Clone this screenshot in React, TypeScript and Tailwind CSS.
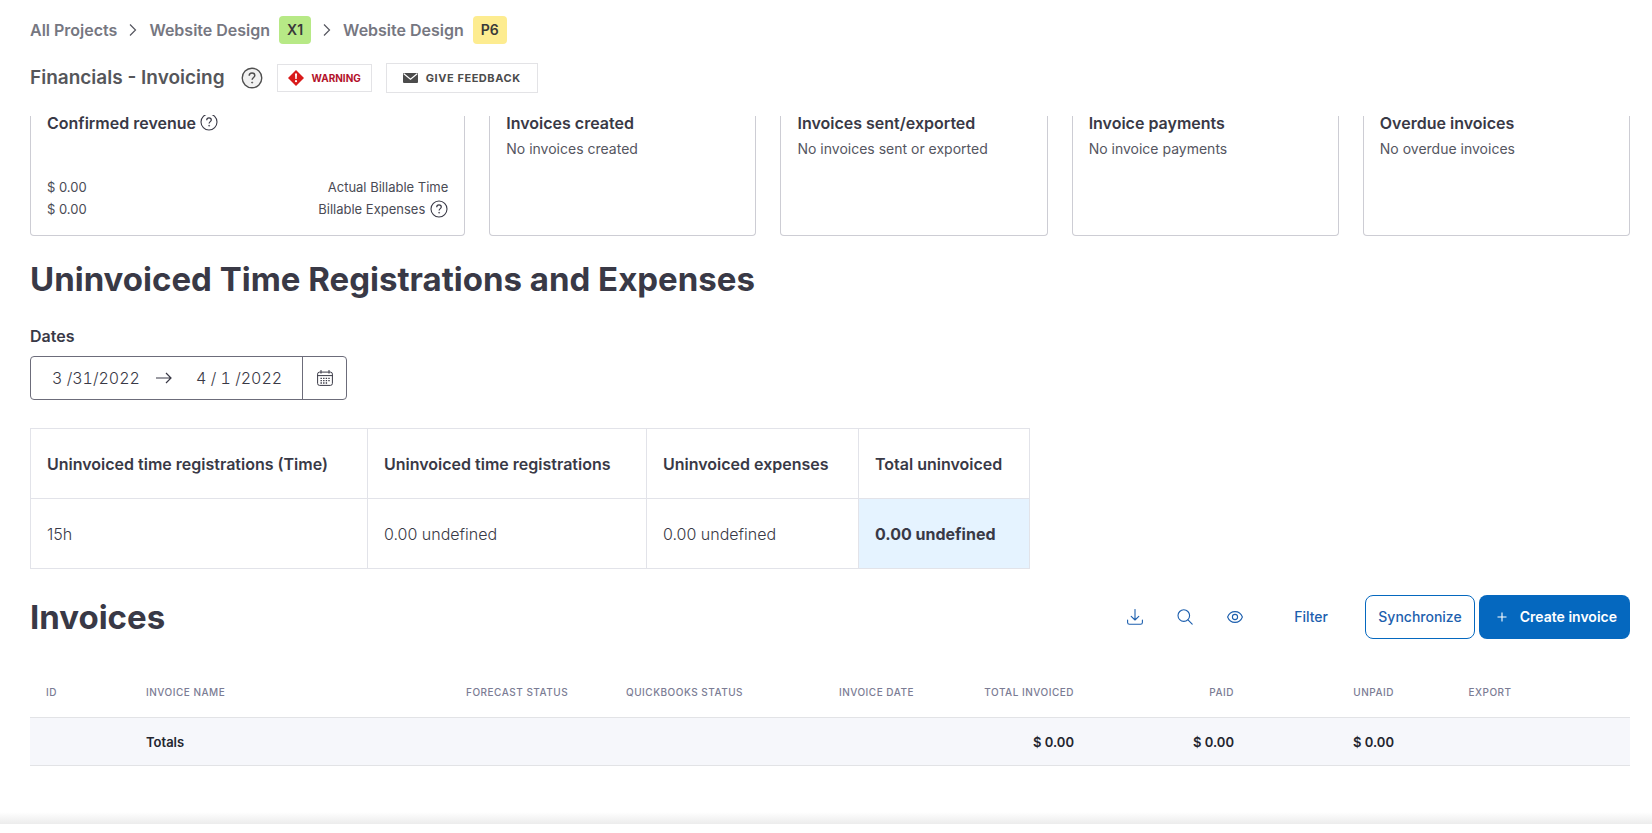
import { useState, type ReactNode } from "react";

interface SummaryCard {
  title: string;
  text: string;
}

const summaryCards: SummaryCard[] = [
  { title: "Invoices created", text: "No invoices created" },
  { title: "Invoices sent/exported", text: "No invoices sent or exported" },
  { title: "Invoice payments", text: "No invoice payments" },
  { title: "Overdue invoices", text: "No overdue invoices" },
];

const invoiceColumns = [
  { label: "ID", width: "w-[6.25%]", align: "text-left", total: "" },
  { label: "Invoice name", width: "w-[20%]", align: "text-left", total: "Totals" },
  { label: "Forecast status", width: "w-[10%]", align: "text-left", total: "" },
  { label: "Quickbooks status", width: "w-[10%]", align: "text-left", total: "" },
  { label: "Invoice date", width: "w-[10%]", align: "text-right", total: "" },
  { label: "Total invoiced", width: "w-[10%]", align: "text-right", total: "$ 0.00" },
  { label: "Paid", width: "w-[10%]", align: "text-right", total: "$ 0.00" },
  { label: "Unpaid", width: "w-[10%]", align: "text-right", total: "$ 0.00" },
  { label: "Export", width: "w-[10%]", align: "text-center", total: "" },
  { label: "", width: "w-[3.75%]", align: "text-left", total: "" },
];

function HelpIcon({ className }: { className?: string }) {
  return (
    <svg className={className} viewBox="0 0 18 18" fill="none" stroke="currentColor" aria-hidden="true">
      <circle cx="9" cy="9" r="8" strokeWidth="1.1" />
      <path d="M6.7 7.2c0-1.4 1-2.3 2.3-2.3s2.3.9 2.3 2.1c0 1.6-2.2 1.7-2.2 3.5" fill="none" strokeWidth="1.2" />
      <circle cx="9.1" cy="12.7" r=".5" fill="currentColor" strokeWidth=".6" />
    </svg>
  );
}

function Chevron() {
  return (
    <svg className="h-3 w-2" viewBox="0 0 8 12" fill="none" stroke="#55565f" strokeWidth="1.2" aria-hidden="true">
      <path d="M1 .5 6.5 6 1 11.5" />
    </svg>
  );
}

function IconButton({ label, children }: { label: string; children: ReactNode }) {
  return (
    <button type="button" aria-label={label} className="flex h-11 w-[50px] items-center justify-center">
      <svg className="size-4" viewBox="0 0 16 16" fill="none" stroke="currentColor" strokeWidth="1.1" strokeLinecap="round" strokeLinejoin="round">
        {children}
      </svg>
    </button>
  );
}

function Header() {
  return (
    <header className="px-[30px] pt-4">
      <nav aria-label="Breadcrumb" className="flex h-7 items-center text-base font-semibold text-[#767781]">
        <a href="#projects">All Projects</a>
        <span className="px-3">
          <Chevron />
        </span>
        <a href="#website-design" className="flex items-center gap-[9px]">
          Website Design
          <span className="flex h-7 w-8 items-center justify-center rounded bg-[#b7e986] text-sm text-[#393939]">X1</span>
        </a>
        <span className="px-3">
          <Chevron />
        </span>
        <a href="#website-design-p6" className="flex items-center gap-[9px]">
          Website Design
          <span className="flex h-7 w-[34px] items-center justify-center rounded bg-[#fdec90] text-sm text-[#393939]">P6</span>
        </a>
      </nav>
      <div className="mt-[19px] flex h-[30px] items-center">
        <h1 className="text-[19px] font-semibold text-[#55565a]">Financials - Invoicing</h1>
        <button type="button" aria-label="Help" className="ml-4 flex size-[22px] items-center justify-center text-[#4f4f4f]">
          <HelpIcon className="size-[22px] fill-[#f1f1f1]" />
        </button>
        <button type="button" className="ml-[14px] flex h-7 items-center gap-2 border border-[#e3e3e6] px-[10px] text-[10px] font-bold text-[#b3122b]">
          <svg className="size-4" viewBox="0 0 16 16" aria-hidden="true">
            <path d="M8 0 16 8 8 16 0 8Z" fill="#d91a1a" />
            <path d="M7 3.6h2L8.7 9H7.3Z" fill="#fff" />
            <circle cx="8" cy="11.2" r="1.1" fill="#fff" />
          </svg>
          WARNING
        </button>
        <button type="button" className="ml-[14px] flex h-[30px] items-center gap-2 border border-[#e3e3e6] px-4 text-[11px] font-bold tracking-wider text-[#4c4c4c]">
          <svg className="h-[10px] w-[15px]" viewBox="0 0 15 10" aria-hidden="true">
            <rect width="15" height="10" rx="1" fill="#4c4c4c" />
            <path d="m.8.8 6.7 5.4L14.2.8" fill="none" stroke="#fff" strokeWidth="1.2" />
          </svg>
          GIVE FEEDBACK
        </button>
      </div>
    </header>
  );
}

function Summary() {
  return (
    <section aria-label="Summary" className="grid grid-cols-[435fr_267fr_267fr_267fr_267fr] gap-6">
      <div className="flex h-[120px] flex-col justify-between rounded-b-sm border border-t-0 border-[#cdcdd4] px-4 pb-[15px]">
        <h3 className="flex h-[14px] items-center gap-1 text-base leading-[14px] font-semibold">
          Confirmed revenue
          <span className="flex h-4 items-end overflow-hidden">
            <HelpIcon className="size-[18px] shrink-0" />
          </span>
        </h3>
        <dl className="text-[13px] leading-[22px] text-[#4a4b55]">
          <div className="flex flex-row-reverse justify-between">
            <dt>Actual Billable Time</dt>
            <dd>$ 0.00</dd>
          </div>
          <div className="flex flex-row-reverse justify-between">
            <dt className="flex items-center gap-[5px]">
              Billable Expenses
              <HelpIcon className="size-[18px] text-[#393946]" />
            </dt>
            <dd>$ 0.00</dd>
          </div>
        </dl>
      </div>
      {summaryCards.map((card) => (
        <div key={card.title} className="h-[120px] rounded-b-sm border border-t-0 border-[#cdcdd4] px-4">
          <h3 className="h-[14px] text-base leading-[14px] font-semibold">{card.title}</h3>
          <p className="mt-[9px] text-sm text-[#55565f]">{card.text}</p>
        </div>
      ))}
    </section>
  );
}

function DateRange() {
  const [from, setFrom] = useState("3 /31/2022");
  const [to, setTo] = useState("4 / 1 /2022");

  return (
    <div className="mt-[23px]">
      <label htmlFor="date-from" className="text-base font-semibold">
        Dates
      </label>
      <div className="mt-2 flex h-11 w-[317px] items-center rounded-sm border border-[#6c6c7a] text-base font-light text-[#393946] tabular-nums">
        <input id="date-from" value={from} onChange={(e) => setFrom(e.target.value)} className="ml-[21px] w-[90px]" />
        <svg className="ml-[14px] h-3 w-4" viewBox="0 0 16 12" fill="none" stroke="currentColor" strokeWidth="1.2" aria-hidden="true">
          <path d="M0 6h15M10 1l5 5-5 5" />
        </svg>
        <input aria-label="End date" value={to} onChange={(e) => setTo(e.target.value)} className="ml-6 w-[90px]" />
        <button type="button" aria-label="Open calendar" className="ml-auto flex h-full w-11 items-center justify-center border-l border-[#6c6c7a]">
          <svg className="size-4" viewBox="0 0 16 16" fill="none" stroke="currentColor" aria-hidden="true">
            <rect x=".6" y="2.1" width="14.8" height="13.3" rx="2" />
            <path d="M.6 5.6h14.8M4 0v3.6M12 0v3.6" />
            <path d="M3.500 8.300h9.600M3.500 10.700h9.600M3.500 13h7" strokeWidth="1.3" strokeDasharray="1.4 1.2" />
          </svg>
        </button>
      </div>
    </div>
  );
}

function UninvoicedTable() {
  return (
    <table className="mt-7 w-[1000px] max-w-full table-fixed border-collapse text-left text-base">
      <thead>
        <tr className="h-[70px]">
          <th className="w-[337px] border border-[#e2e3e9] px-4 font-semibold">Uninvoiced time registrations (Time)</th>
          <th className="w-[279px] border border-[#e2e3e9] px-4 font-semibold">Uninvoiced time registrations</th>
          <th className="w-[212px] border border-[#e2e3e9] px-4 font-semibold">Uninvoiced expenses</th>
          <th className="border border-[#e2e3e9] px-4 font-semibold">Total uninvoiced</th>
        </tr>
      </thead>
      <tbody>
        <tr className="h-[70px]">
          <td className="border border-[#e2e3e9] px-4 font-light">15h</td>
          <td className="border border-[#e2e3e9] px-4 font-light">0.00 undefined</td>
          <td className="border border-[#e2e3e9] px-4 font-light">0.00 undefined</td>
          <td className="border border-[#e2e3e9] bg-[#e5f3ff] px-4 font-bold">0.00 undefined</td>
        </tr>
      </tbody>
    </table>
  );
}

function Invoices() {
  return (
    <section>
      <div className="mt-[26px] flex items-center">
        <h2 className="text-[33px] leading-11 font-bold">Invoices</h2>
        <div className="ml-auto flex items-center text-sm font-medium text-[#1d5fae]">
          <IconButton label="Download">
            <path d="M8 .5v10.400M4.200 7.300 8 11l3.800-3.700M.6 11v2.400c0 1 .8 1.900 1.900 1.900h11c1 0 1.900-.9 1.900-1.900V11" />
          </IconButton>
          <IconButton label="Search">
            <circle cx="6.8" cy="6.6" r="5.8" />
            <path d="m11 10.8 4.2 4.4" />
          </IconButton>
          <IconButton label="Visible columns">
            <path d="M.6 8C2 4.400 4.800 2.600 8 2.600S14 4.400 15.400 8C14 11.600 11.200 13.400 8 13.400S2 11.600.6 8Z" />
            <circle cx="8" cy="8" r="2.600" />
          </IconButton>
          <button type="button" className="mr-[37px] ml-[34px] h-11">
            Filter
          </button>
          <button type="button" className="h-11 w-[110px] rounded-lg border border-[#0568bf]">
            Synchronize
          </button>
          <button type="button" className="ml-1 flex h-11 w-[151px] items-center justify-end gap-[13px] rounded-lg bg-[#0568bf] pr-[13px] font-semibold text-white">
            <svg className="size-[10px]" viewBox="0 0 10 10" stroke="currentColor" strokeWidth="1.1" aria-hidden="true">
              <path d="M5 .5v9M.5 5h9" />
            </svg>
            Create invoice
          </button>
        </div>
      </div>
      <table className="mt-[26px] w-full table-fixed border-collapse text-[#24252e]">
        <thead>
          <tr className="h-[52px] border-b border-[#e2e3e6]">
            {invoiceColumns.map((column) => (
              <th key={column.label} className={`px-4 pt-1 text-[10px] font-medium tracking-wider whitespace-nowrap text-[#7b7c94] uppercase ${column.width} ${column.align}`}>
                {column.label}
              </th>
            ))}
          </tr>
        </thead>
        <tbody>
          <tr className="h-12 border-b border-[#e2e3e6] bg-[#f6f7fb]">
            {invoiceColumns.map((column) => (
              <td key={column.label} className={`px-4 pt-1 text-[13px] font-semibold ${column.align}`}>
                {column.total}
              </td>
            ))}
          </tr>
        </tbody>
      </table>
    </section>
  );
}

export default function App() {
  return (
    <div className="flex min-h-screen flex-col bg-white font-['Inter','Liberation_Sans',sans-serif] text-[#393946]">
      <Header />
      <main className="mt-[23px] flex-1 pr-[22px] pl-[30px]">
        <Summary />
        <h2 className="mt-[21px] text-[33px] leading-11 font-bold">Uninvoiced Time Registrations and Expenses</h2>
        <DateRange />
        <UninvoicedTable />
        <Invoices />
      </main>
      <footer>
        <div className="h-3 bg-gradient-to-b from-transparent to-[#ececec]" />
        <div className="h-[9px]" />
      </footer>
    </div>
  );
}
